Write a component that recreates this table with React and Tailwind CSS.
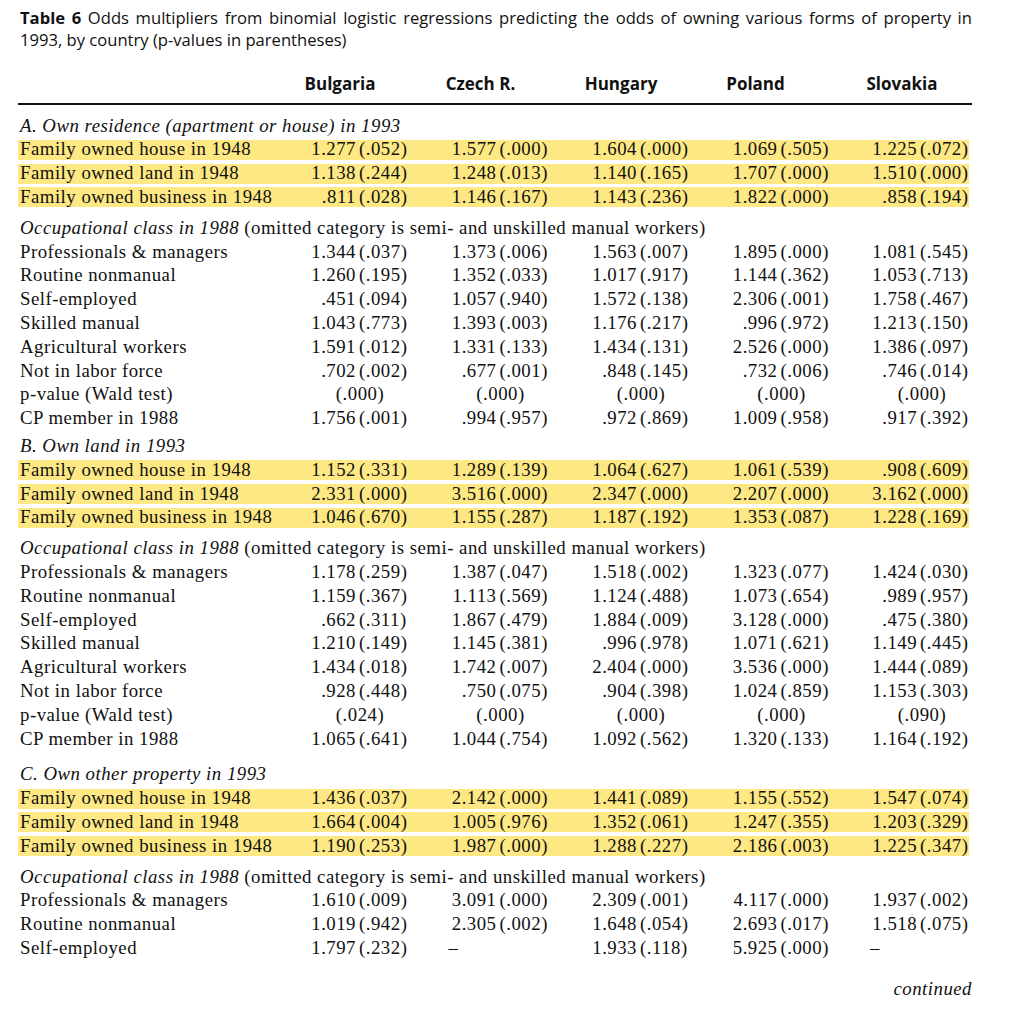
const sans = { fontFamily: '"Open Sans", "Liberation Sans", sans-serif' }

const sections = [
  {
    title: 'A. Own residence (apartment or house) in 1993',
    gapBefore: 'mt-[9.6px]',
    family: [
      ['Family owned house in 1948', ['1.277', '.052'], ['1.577', '.000'], ['1.604', '.000'], ['1.069', '.505'], ['1.225', '.072']],
      ['Family owned land in 1948', ['1.138', '.244'], ['1.248', '.013'], ['1.140', '.165'], ['1.707', '.000'], ['1.510', '.000']],
      ['Family owned business in 1948', ['.811', '.028'], ['1.146', '.167'], ['1.143', '.236'], ['1.822', '.000'], ['.858', '.194']],
    ],
    occ: [
      ['Professionals & managers', ['1.344', '.037'], ['1.373', '.006'], ['1.563', '.007'], ['1.895', '.000'], ['1.081', '.545']],
      ['Routine nonmanual', ['1.260', '.195'], ['1.352', '.033'], ['1.017', '.917'], ['1.144', '.362'], ['1.053', '.713']],
      ['Self-employed', ['.451', '.094'], ['1.057', '.940'], ['1.572', '.138'], ['2.306', '.001'], ['1.758', '.467']],
      ['Skilled manual', ['1.043', '.773'], ['1.393', '.003'], ['1.176', '.217'], ['.996', '.972'], ['1.213', '.150']],
      ['Agricultural workers', ['1.591', '.012'], ['1.331', '.133'], ['1.434', '.131'], ['2.526', '.000'], ['1.386', '.097']],
      ['Not in labor force', ['.702', '.002'], ['.677', '.001'], ['.848', '.145'], ['.732', '.006'], ['.746', '.014']],
      ['p-value (Wald test)', '.000', '.000', '.000', '.000', '.000'],
      ['CP member in 1988', ['1.756', '.001'], ['.994', '.957'], ['.972', '.869'], ['1.009', '.958'], ['.917', '.392']],
    ],
  },
  {
    title: 'B. Own land in 1993',
    gapBefore: 'mt-[4px]',
    family: [
      ['Family owned house in 1948', ['1.152', '.331'], ['1.289', '.139'], ['1.064', '.627'], ['1.061', '.539'], ['.908', '.609']],
      ['Family owned land in 1948', ['2.331', '.000'], ['3.516', '.000'], ['2.347', '.000'], ['2.207', '.000'], ['3.162', '.000']],
      ['Family owned business in 1948', ['1.046', '.670'], ['1.155', '.287'], ['1.187', '.192'], ['1.353', '.087'], ['1.228', '.169']],
    ],
    occ: [
      ['Professionals & managers', ['1.178', '.259'], ['1.387', '.047'], ['1.518', '.002'], ['1.323', '.077'], ['1.424', '.030']],
      ['Routine nonmanual', ['1.159', '.367'], ['1.113', '.569'], ['1.124', '.488'], ['1.073', '.654'], ['.989', '.957']],
      ['Self-employed', ['.662', '.311'], ['1.867', '.479'], ['1.884', '.009'], ['3.128', '.000'], ['.475', '.380']],
      ['Skilled manual', ['1.210', '.149'], ['1.145', '.381'], ['.996', '.978'], ['1.071', '.621'], ['1.149', '.445']],
      ['Agricultural workers', ['1.434', '.018'], ['1.742', '.007'], ['2.404', '.000'], ['3.536', '.000'], ['1.444', '.089']],
      ['Not in labor force', ['.928', '.448'], ['.750', '.075'], ['.904', '.398'], ['1.024', '.859'], ['1.153', '.303']],
      ['p-value (Wald test)', '.024', '.000', '.000', '.000', '.090'],
      ['CP member in 1988', ['1.065', '.641'], ['1.044', '.754'], ['1.092', '.562'], ['1.320', '.133'], ['1.164', '.192']],
    ],
  },
  {
    title: 'C. Own other property in 1993',
    gapBefore: 'mt-[12px]',
    family: [
      ['Family owned house in 1948', ['1.436', '.037'], ['2.142', '.000'], ['1.441', '.089'], ['1.155', '.552'], ['1.547', '.074']],
      ['Family owned land in 1948', ['1.664', '.004'], ['1.005', '.976'], ['1.352', '.061'], ['1.247', '.355'], ['1.203', '.329']],
      ['Family owned business in 1948', ['1.190', '.253'], ['1.987', '.000'], ['1.288', '.227'], ['2.186', '.003'], ['1.225', '.347']],
    ],
    occ: [
      ['Professionals & managers', ['1.610', '.009'], ['3.091', '.000'], ['2.309', '.001'], ['4.117', '.000'], ['1.937', '.002']],
      ['Routine nonmanual', ['1.019', '.942'], ['2.305', '.002'], ['1.648', '.054'], ['2.693', '.017'], ['1.518', '.075']],
      ['Self-employed', ['1.797', '.232'], '–', ['1.933', '.118'], ['5.925', '.000'], '–'],
    ],
  },
]

const cols = 'grid grid-cols-[284px_140.5px_140.5px_140.5px_140.5px_104.5px] items-center'

// header labels sit a little off-centre in the scan, Poland most of all
const countries = [
  ['Bulgaria', ''],
  ['Czech R.', ''],
  ['Hungary', ''],
  ['Poland', '-ml-[6px]'],
  ['Slovakia', ''],
]

function Cell({ v }) {
  if (v === '–') return <div className="pl-[6px]">–</div>
  if (typeof v === 'string') return <div className="w-[116px] text-center">({v})</div>
  return (
    <div className="flex whitespace-nowrap">
      <span className="w-[54px] text-right">{v[0]}</span>
      <span className="ml-[3px]">({v[1]})</span>
    </div>
  )
}

function Row({ row, hl }) {
  const [label, ...vals] = row
  return (
    <div className="h-[23.8px] flex items-center">
      <div className={`${cols} w-full h-[20px] ${hl ? 'bg-[#fde883]' : ''}`}>
        <div className="pl-[2px] whitespace-nowrap">{label}</div>
        {vals.map((v, i) => <Cell key={i} v={v} />)}
      </div>
    </div>
  )
}

function Section({ s }) {
  return (
    <div className={s.gapBefore}>
      <div className="h-[23.8px] flex items-center pl-[2px] italic">{s.title}</div>
      {s.family.map((r, i) => <Row key={i} row={r} hl />)}
      <div className="mt-[7px] h-[23.8px] flex items-center pl-[2px] whitespace-nowrap">
        <span className="italic">Occupational class in 1988</span>
        <span>&nbsp;(omitted category is semi- and unskilled manual workers)</span>
      </div>
      {s.occ.map((r, i) => <Row key={i} row={r} />)}
    </div>
  )
}

export default function App() {
  return (
    <div className="w-[1012px] h-[1022px] bg-white text-[#111] overflow-hidden">
      <div className="pt-[7px] pl-[20px] w-[972px] text-[16.6px] leading-[22px]" style={sans}>
        <div className="text-justify [text-align-last:justify]">
          <span className="font-bold">Table 6</span> Odds multipliers from binomial logistic regressions predicting the odds of owning various forms of property in
        </div>
        <div>1993, by country (p-values in parentheses)</div>
      </div>

      <div className={`${cols} ml-[18px] w-[951px] mt-[20px] h-[24px] text-[17px] font-bold`} style={sans}>
        <div />
        {countries.map(([c, shift]) => (
          <div key={c} className={`w-[76px] text-center whitespace-nowrap ${shift}`}>{c}</div>
        ))}
      </div>
      <div className="ml-[18px] w-[954px] mt-[7.5px] h-[2px] bg-[#111]" />

      <div
        className="ml-[18px] w-[951px] text-[18.8px] tracking-[0.5px] leading-none"
        style={{ fontFamily: '"Liberation Serif", "DejaVu Serif", serif' }}
      >
        {sections.map((s, i) => <Section key={i} s={s} />)}
        <div className="mt-[20px] text-right italic w-[954px]">continued</div>
      </div>
    </div>
  )
}
